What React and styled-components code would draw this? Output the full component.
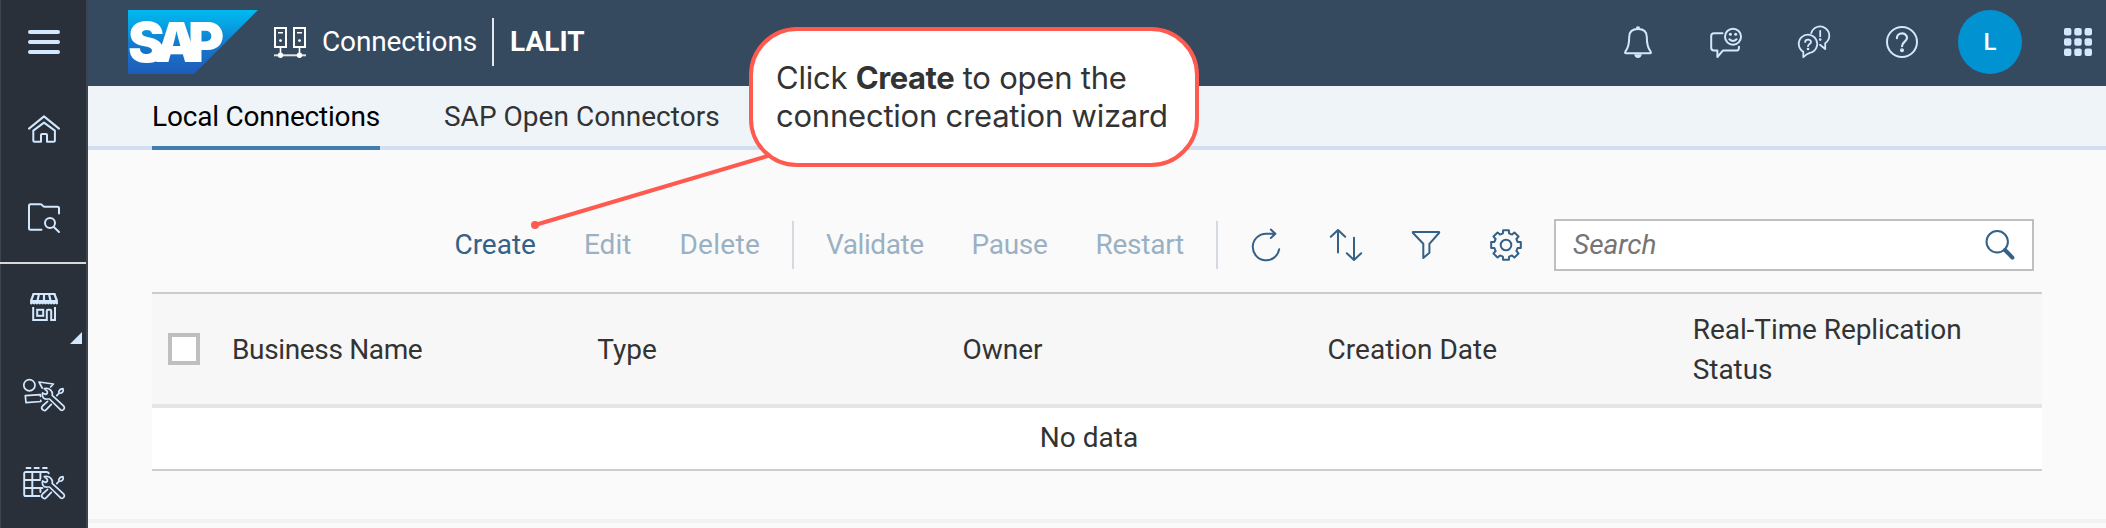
import React from 'react';
import styled, { createGlobalStyle } from 'styled-components';

const GlobalStyle = createGlobalStyle`
  *, *::before, *::after { box-sizing: border-box; }
  body {
    margin: 0;
    background: #fafafa;
    font-family: Roboto, "Liberation Sans", sans-serif;
    font-size: 28px;
    color: #333;
  }
  button, input { font: inherit; }
`;

const Shell = styled.div`
  position: relative;
  display: flex;
  width: 2106px;
  height: 528px;
  overflow: hidden;
`;

const Sidebar = styled.nav`
  flex: none;
  width: 88px;
  display: flex;
  flex-direction: column;
  background: #29303a;
  border-left: 1px solid #3a4550;
  border-right: 2px solid #3a4550;
  color: #d1e8ff;
`;

const NavItem = styled.button`
  position: relative;
  flex: none;
  display: flex;
  align-items: center;
  justify-content: center;
  width: 86px;
  height: ${(p) => p.$height || 88}px;
  padding: 0 0 ${(p) => p.$lift || 0}px;
  border: 0;
  background: none;
  color: inherit;
`;

const NavDivider = styled.div`
  flex: none;
  height: 2px;
  margin-left: -1px;
  background: #d9d9d9;
`;

const SubmenuMark = styled.span`
  position: absolute;
  right: 5px;
  bottom: 7px;
  border-left: 12px solid transparent;
  border-bottom: 12px solid #d1e8ff;
`;

const Page = styled.div`
  flex: 1;
  min-width: 0;
  display: flex;
  flex-direction: column;
`;

const Header = styled.header`
  flex: none;
  display: flex;
  align-items: center;
  height: 86px;
  padding: 0 0 2px 40px;
  background: #354a5f;
  color: #fff;
  overflow: hidden;
`;

const Logo = styled.svg`
  flex: none;
  width: 130px;
  height: 64px;
  margin-right: 16px;
`;

const LogoText = styled.text`
  font-family: Inter, sans-serif;
  font-weight: 900;
  font-size: 55px;
  fill: #fff;
`;

const AppTitle = styled.div`
  margin: 0 15px 0 16px;
  padding-bottom: 1px;
  letter-spacing: -0.13px;
`;

const TitleDivider = styled.div`
  width: 2px;
  height: 48px;
  background: #e5e9ed;
`;

const SpaceName = styled.div`
  margin-left: 16px;
  padding-bottom: 1px;
  font-weight: 700;
`;

const Actions = styled.div`
  display: flex;
  margin: 0 -16px 0 auto;
  color: #d1e8ff;
`;

const Action = styled.button`
  flex: none;
  display: flex;
  align-items: center;
  justify-content: center;
  width: 88px;
  height: 84px;
  padding: 0;
  border: 0;
  background: none;
  color: inherit;
`;

const Avatar = styled.span`
  display: flex;
  align-items: center;
  justify-content: center;
  width: 64px;
  height: 64px;
  padding-bottom: 1px;
  border-radius: 50%;
  background: #0092d1;
  color: #fff;
  font-size: 24px;
  font-weight: 500;
`;

const Tabs = styled.div`
  flex: none;
  display: flex;
  gap: 64px;
  height: 64px;
  padding-left: 64px;
  background: #eff4f9;
  box-shadow: inset 0 -4px #d1dff0;
`;

const Tab = styled.button`
  display: flex;
  align-items: center;
  height: 64px;
  padding: 0;
  border: 0;
  border-bottom: 4px solid ${(p) => (p.$active ? '#427cac' : 'transparent')};
  background: none;
  color: ${(p) => (p.$active ? '#000' : '#333')};
  letter-spacing: ${(p) => (p.$active ? '-0.19px' : '0.03px')};
`;

const Content = styled.main`
  flex: none;
  height: 373px;
  padding: 0 64px;
  border-bottom: 4px solid #f2f2f2;
`;

const Toolbar = styled.div`
  display: flex;
  align-items: center;
  justify-content: flex-end;
  gap: 16px;
  height: 52px;
  margin: 69px 0 21px;
  padding-right: 8px;
`;

const ToolButton = styled.button`
  flex: none;
  height: 52px;
  padding: 0 16px 1px;
  border: 0;
  background: none;
  color: ${(p) => (p.disabled ? '#9ab0c3' : '#346187')};
  letter-spacing: ${(p) => p.$tracking || 0}px;
`;

const ToolDivider = styled.div`
  width: 2px;
  height: 48px;
  background: #d3d9de;
`;

const IconButton = styled.button`
  flex: none;
  display: flex;
  align-items: center;
  justify-content: center;
  width: 64px;
  height: 52px;
  padding: 0;
  border: 0;
  background: none;
  color: #346187;
`;

const SearchField = styled.label`
  flex: none;
  display: flex;
  align-items: center;
  width: 480px;
  height: 52px;
  padding: 0 14px 0 17px;
  border: 2px solid #bfbfbf;
  background: #fff;
  color: #346187;
`;

const SearchInput = styled.input`
  flex: 1;
  min-width: 0;
  height: 46px;
  padding: 0 0 1px;
  border: 0;
  outline: 0;
  background: none;
  color: #333;
  &::placeholder { color: #757575; font-style: italic; opacity: 1; }
`;

const Table = styled.section`
  width: 1890px;
  border-top: 2px solid #ccc;
  border-bottom: 2px solid #ccc;
`;

const HeadRow = styled.div`
  display: grid;
  grid-template-columns: 64px repeat(5, 1fr);
  align-items: center;
  height: 114px;
  background: #f7f7f7;
  border-bottom: 4px solid #e5e5e5;
`;

const CheckBox = styled.span`
  width: 32px;
  height: 32px;
  margin-left: 16px;
  border: 4px solid #bfbfbf;
  background: #fff;
`;

const HeadCell = styled.div`
  padding: 1px 16px 0;
  line-height: 39.2px;
  letter-spacing: ${(p) => p.$tracking || 0}px;
`;

const EmptyRow = styled.div`
  display: flex;
  align-items: center;
  justify-content: center;
  height: 61px;
  padding: 0 16px 3px 0;
  background: #fff;
`;

const Callout = styled.div`
  position: absolute;
  left: 749px;
  top: 27px;
  width: 450px;
  height: 140px;
  padding: 28px 0 0 23px;
  border: 4px solid #ff5a4f;
  border-radius: 48px;
  background: #fff;
  font-family: Inter, "Liberation Sans", sans-serif;
  font-size: 31px;
  line-height: 38px;
  letter-spacing: -0.22px;
  white-space: nowrap;
  b { letter-spacing: -0.45px; }
`;

const Pointer = styled.svg`
  position: absolute;
  left: 525px;
  top: 145px;
`;

const Icon = ({ size = 36, width = 2, children }) => (
  <svg width={size} height={size} viewBox={`0 0 ${size} ${size}`} fill="none" stroke="currentColor" strokeWidth={width} strokeLinejoin="round" strokeLinecap="round">
    {children}
  </svg>
);

const MenuIcon = () => (
  <Icon size={44} width={4}><path d="M8 12H36M8 22H36M8 32H36" /></Icon>
);

const HomeIcon = () => (
  <Icon size={44}>
    <path d="M7 20.6L22 8.4L37 20.6" />
    <path d="M12.8 33.8q-1.5 0-1.5-1.5V22.6L22 14.6L32.9 22.6V32.3q0 1.5-1.5 1.5H25V27q0-1-1-1h-4q-1 0-1 1V33.8Z" />
  </Icon>
);

const FolderSearchIcon = () => (
  <Icon size={44}>
    <path d="M19.5 33.7H8.5q-1.5 0-1.5-1.5V9.8q0-1.5 1.5-1.5H18.5q1.3 0 2 1.2t2 1.2H35.5q1.5 0 1.5 1.5V17.5" />
    <circle cx="28" cy="27" r="5" />
    <path d="M31.8 31L37 36" />
  </Icon>
);

const StoreIcon = () => (
  <Icon size={44}>
    <g strokeLinejoin="miter" strokeLinecap="butt">
      <path d="M10.6 9H33.4" />
      <path d="M11.6 9L9 16M17 9L15.4 16M22 8V16M27 9L28.6 16M32.4 9L35 16" strokeWidth="2.2" />
      <path d="M8.4 15H35.6L36 17.2V18.5q-1.2 2-2.6 0q-1.4 2-2.8 0q-1.4 2-2.8 0q-1.4 2-2.8 0q-1.5 2-3 0q-1.4 2-2.8 0q-1.4 2-2.8 0q-1.4 2-2.8 0q-1.4 2-2.8 0q-1.4 2-2.8 0V17.2Z" fill="currentColor" stroke="none" />
      <path d="M11.2 22V35H24.8V26q0-1.3 1.2-1.3h2q1.2 0 1.2 1.3V35H33V22" />
      <rect x="15.2" y="24.8" width="6" height="6" />
    </g>
  </Icon>
);

const Tools = () => (
  <g strokeWidth="1.7">
    <path d="M22.3 15.7L25.3 18.3V20.3L23.7 21.5L20.6 20C19.7 23.5 21.5 26.3 25 26H27.5L38.4 36.7Q40.2 38 41.6 36.5T41.8 33.2L30.2 22.3C31 18.5 28 14.5 22.3 15.7Z" />
    <path d="M34.8 22.6L37.2 20M37 20.2C36.2 17.8 38 16 41 15.7C42 18.4 40 20.6 37 20.2Z" />
    <path d="M25.6 28.3L20.5 33A2.6 2.6 0 0 0 24.3 36.6L29.3 31.3" />
  </g>
);

const ModelToolsIcon = () => (
  <Icon size={44} width={1.7}>
    <circle cx="7.4" cy="12.2" r="5.6" />
    <path d="M20.2 15L17 9L31.4 11L28.6 14" />
    <path d="M18.7 27.4L18.9 28.5L4 29.7L3.3 22.7L18.3 21.7L18.5 23.5" />
    <Tools />
  </Icon>
);

const GridToolsIcon = () => (
  <Icon size={44} width={1.9}>
    <path d="M4.5 7H8.5M12.6 7H16.8M21 7H24.8" />
    <path d="M17.5 35H3.8q-1.6 0-1.6-1.6V12.6Q2.2 11 3.8 11H24.6q1.5 0 2.2 1.2M10.3 11V35M18.4 11V17.5M18.4 27V31M2.2 19H18M2.2 27H20.5" />
    <Tools />
  </Icon>
);

const ServersIcon = () => (
  <Icon size={32}>
    <g strokeLinejoin="miter" strokeLinecap="butt">
      <rect x="1" y="2" width="11" height="19" />
      <rect x="20" y="2" width="11" height="19" />
      <path d="M4 6.8H9M23 6.8H28" strokeWidth="1.6" />
      <path d="M6.5 22V28M25.5 22V28" strokeWidth="1.6" />
      <path d="M0 29.3H32" strokeWidth="2" opacity=".85" />
    </g>
    <g fill="currentColor" stroke="none">
      <circle cx="6.5" cy="14.6" r="1.4" /><circle cx="25.5" cy="14.6" r="1.4" />
      <circle cx="6.5" cy="29.3" r="2.7" /><circle cx="25.5" cy="29.3" r="2.7" />
    </g>
  </Icon>
);

const BellIcon = () => (
  <Icon>
    <path d="M18 5C12.5 5 9.2 8 9.2 13C9.2 19.5 8.6 23.5 5.6 27.2Q4.4 29.3 6 29.3H30Q31.6 29.3 30.4 27.2C27.4 23.5 26.8 19.5 26.8 13C26.8 8 23.5 5 18 5Z" />
    <path d="M15.8 4.6a2.2 2.4 0 0 1 4.4 0ZM14.2 30.3H21.8Q21.3 34 18 34T14.2 30.3Z" fill="currentColor" stroke="none" />
  </Icon>
);

const FeedbackIcon = () => (
  <Icon>
    <path d="M14.5 9.2H6Q3.2 9.2 3.2 12V23.8Q3.2 26.6 6 26.6H9.4V33L14.8 26.6H29Q31 26.6 31 22.8" />
    <circle cx="25" cy="12.7" r="8" />
    <path d="M21.4 15.2Q25 18.8 28.6 15.2" />
    <g fill="currentColor" stroke="none"><circle cx="22.4" cy="10.2" r="1.5" /><circle cx="27.7" cy="10.2" r="1.5" /></g>
  </Icon>
);

const DiscussIcon = () => (
  <Icon width={1.8}>
    <path d="M7.3 33.2V27.8A9.2 9.2 0 1 1 13.8 28.9Q10.5 30 7.3 33.2Z" />
    <path d="M15.2 9.3A9.2 9.2 0 1 1 29.2 19.3V25L24 20.8" />
    <path d="M9.2 18C9.2 14.8 15 14.8 15 18C15 20 12 20 12 22.2M24.2 6.8V12.3" />
    <g fill="currentColor" stroke="none"><circle cx="12" cy="25" r="1.3" /><circle cx="24.2" cy="15.6" r="1.3" /></g>
  </Icon>
);

const HelpIcon = () => (
  <Icon>
    <circle cx="18" cy="18" r="15" />
    <path d="M12.9 14.2C12.9 7.8 23 8 23 13.8C23 17.6 18 17.6 18 22.2" strokeWidth="2.2" />
    <circle cx="18" cy="26.2" r="2" fill="currentColor" stroke="none" />
  </Icon>
);

const AppsIcon = () => (
  <Icon>
    <g fill="currentColor" stroke="none">
      {[4, 14.3, 24.6].flatMap((y) => [4, 14.3, 24.6].map((x) => (
        <rect key={`${x}-${y}`} x={x} y={y} width="7.4" height="7.4" rx="2" />
      )))}
    </g>
  </Icon>
);

const RefreshIcon = () => (
  <Icon>
    <path d="M31.2 22.2A13.3 13.3 0 1 1 18 6.7H27.4M22.8 2.6L27.4 6.8L22.8 11" />
  </Icon>
);

const SortIcon = () => (
  <Icon>
    <path d="M10 25.5V3.4M2.8 9.8L10 3L17.2 9.8M26 10.7V32.8M18.8 26.3L26 33L33.2 26.3" />
  </Icon>
);

const FilterIcon = () => (
  <Icon>
    <path d="M5.2 5H30.8Q31.6 5 31 6L21.4 16.8V25.8L15.3 31V16.8L5 6Q4.4 5 5.2 5Z" />
  </Icon>
);

const gearPath = (() => {
  const points = [];
  for (let i = 0; i < 8; i += 1) {
    const base = (i * Math.PI) / 4;
    [[-15, 12], [-11, 15.1], [11, 15.1], [15, 12]].forEach(([deg, radius]) => {
      const angle = base + (deg * Math.PI) / 180;
      points.push(`${(18 + radius * Math.cos(angle)).toFixed(2)} ${(18 + radius * Math.sin(angle)).toFixed(2)}`);
    });
  }
  return `M${points.join('L')}Z`;
})();

const SettingsIcon = () => (
  <Icon><path d={gearPath} /><circle cx="18" cy="18" r="5.3" /></Icon>
);

const SearchIcon = () => (
  <Icon>
    <circle cx="15.2" cy="14.8" r="10.7" />
    <path d="M23 23L30.4 30.6" strokeWidth="4" />
  </Icon>
);

const columns = [
  { label: 'Business Name', tracking: -0.35 },
  { label: 'Type', tracking: 0 },
  { label: 'Owner', tracking: 0 },
  { label: 'Creation Date', tracking: 0 },
  { label: 'Real-Time Replication Status', tracking: -0.08 },
];

export default function App() {
  return (
    <Shell>
      <GlobalStyle />
      <Sidebar>
        <NavItem $height={86} $lift={2}><MenuIcon /></NavItem>
        <NavItem><HomeIcon /></NavItem>
        <NavItem><FolderSearchIcon /></NavItem>
        <NavDivider />
        <NavItem $height={87} $lift={1}><StoreIcon /><SubmenuMark /></NavItem>
        <NavItem><ModelToolsIcon /></NavItem>
        <NavItem><GridToolsIcon /></NavItem>
      </Sidebar>
      <Page>
        <Header>
          <Logo viewBox="0 0 130 64">
            <defs>
              <linearGradient id="logoFill" x1="0" y1="0" x2="0" y2="1">
                <stop offset="0" stopColor="#00b8f1" />
                <stop offset=".25" stopColor="#06a0e0" />
                <stop offset=".55" stopColor="#1578cb" />
                <stop offset="1" stopColor="#1f5bba" />
              </linearGradient>
            </defs>
            <path d="M0 0H130L66 64H0Z" fill="url(#logoFill)" />
            <LogoText x="0 27 60" y="52">SAP</LogoText>
          </Logo>
          <ServersIcon />
          <AppTitle>Connections</AppTitle>
          <TitleDivider />
          <SpaceName>LALIT</SpaceName>
          <Actions>
            <Action><BellIcon /></Action>
            <Action><FeedbackIcon /></Action>
            <Action><DiscussIcon /></Action>
            <Action><HelpIcon /></Action>
            <Action><Avatar>L</Avatar></Action>
            <Action><AppsIcon /></Action>
          </Actions>
        </Header>
        <Tabs>
          <Tab $active>Local Connections</Tab>
          <Tab>SAP Open Connectors</Tab>
        </Tabs>
        <Content>
          <Toolbar>
            <ToolButton>Create</ToolButton>
            <ToolButton disabled>Edit</ToolButton>
            <ToolButton disabled $tracking={0.3}>Delete</ToolButton>
            <ToolDivider />
            <ToolButton disabled $tracking={-0.45}>Validate</ToolButton>
            <ToolButton disabled $tracking={-0.3}>Pause</ToolButton>
            <ToolButton disabled $tracking={-0.26}>Restart</ToolButton>
            <ToolDivider />
            <IconButton><RefreshIcon /></IconButton>
            <IconButton><SortIcon /></IconButton>
            <IconButton><FilterIcon /></IconButton>
            <IconButton><SettingsIcon /></IconButton>
            <SearchField>
              <SearchInput placeholder="Search" />
              <SearchIcon />
            </SearchField>
          </Toolbar>
          <Table>
            <HeadRow>
              <CheckBox />
              {columns.map((column) => (
                <HeadCell key={column.label} $tracking={column.tracking}>{column.label}</HeadCell>
              ))}
            </HeadRow>
            <EmptyRow>No data</EmptyRow>
          </Table>
        </Content>
      </Page>
      <Pointer width="250" height="90" viewBox="0 0 250 90">
        <path d="M10 80L246 10" stroke="#ff5a4f" strokeWidth="4" />
        <circle cx="10" cy="80" r="4" fill="#ff5a4f" />
      </Pointer>
      <Callout>
        Click <b>Create</b> to open the<br />connection creation wizard
      </Callout>
    </Shell>
  );
}
